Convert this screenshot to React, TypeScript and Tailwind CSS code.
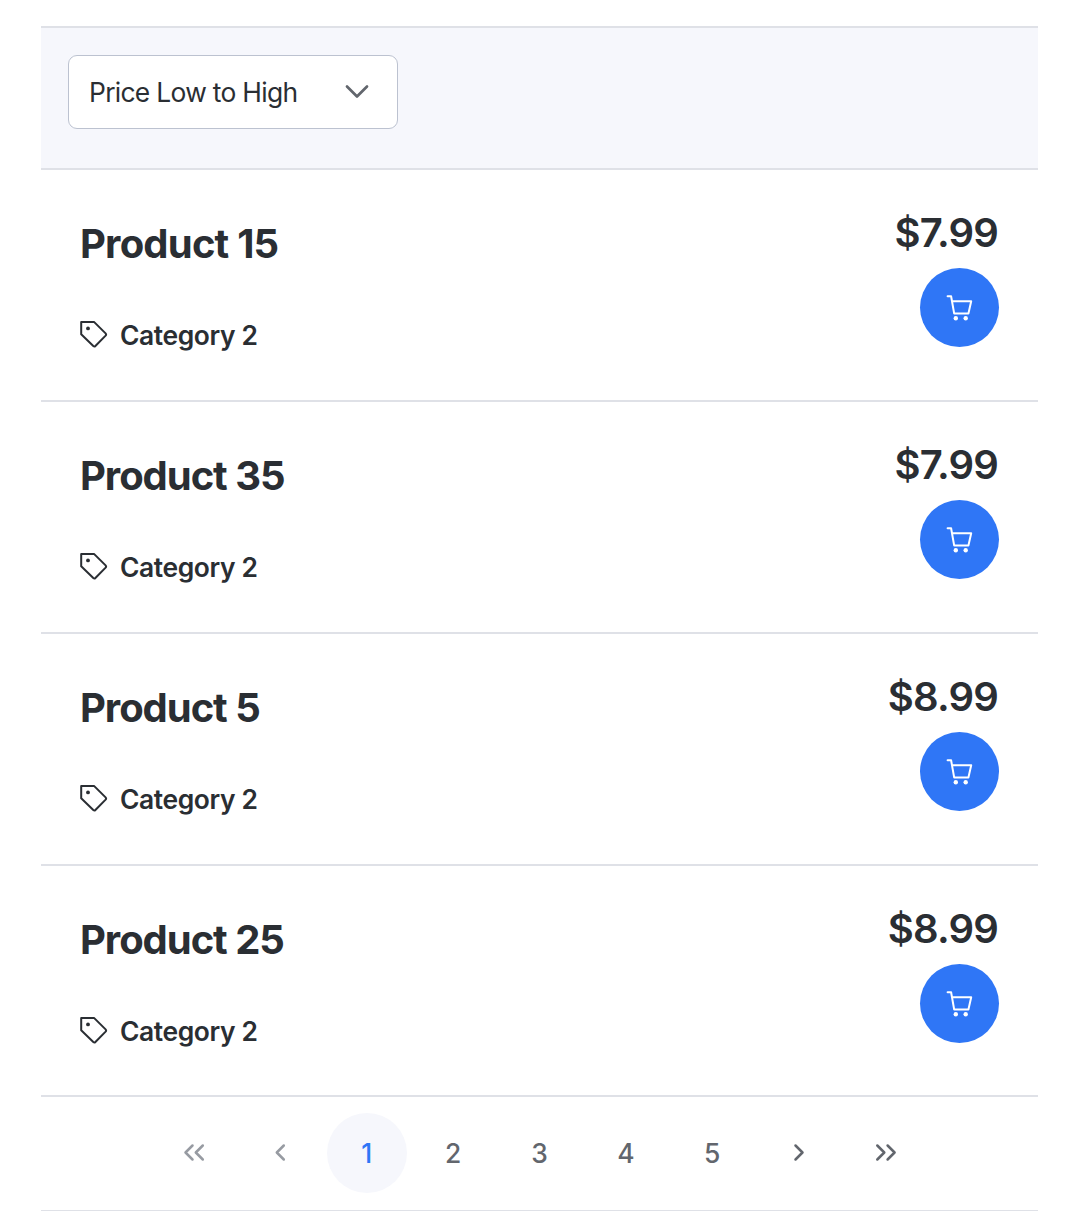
import React from 'react';

const products = [
  { name: 'Product 15', price: '$7.99', tracking: 'tracking-[-0.8px]' },
  { name: 'Product 35', price: '$7.99', tracking: 'tracking-[-1.05px]' },
  { name: 'Product 5', price: '$8.99', tracking: 'tracking-[-1.05px]' },
  { name: 'Product 25', price: '$8.99', tracking: 'tracking-[-1.05px]' },
];

function TagIcon() {
  return (
    <svg width="28" height="28" viewBox="0 0 28 28" fill="none" stroke="#2a2e33" strokeWidth="2" strokeLinejoin="round">
      <path d="M1.2 1.9H14L25.6 13.4Q26.6 14.5 25.6 15.6L15.4 26Q14.4 27 13.3 26L1.2 14.2Z" />
      <circle cx="8" cy="8.4" r="1.9" fill="#2a2e33" stroke="none" />
    </svg>
  );
}

function CartIcon() {
  return (
    <svg width="28" height="28" viewBox="0 0 28 28" fill="none" stroke="#fff" strokeWidth="2" strokeLinecap="round" strokeLinejoin="round">
      <path d="M1.6 2.3H5.1L8.2 19.6H22.4L25.2 7.3H6" />
      <circle cx="9.8" cy="24.2" r="2.2" fill="#fff" stroke="none" />
      <circle cx="19.7" cy="24.2" r="2.2" fill="#fff" stroke="none" />
    </svg>
  );
}

function Chevron({ kind }: { kind: 'first' | 'prev' | 'next' | 'last' }) {
  const paths = {
    first: 'M12.5 6.5L5.5 13.5L12.5 20.5M22.8 6.5L15.8 13.5L22.8 20.5',
    prev: 'M17.8 6.5L10.8 13.5L17.8 20.5',
    next: 'M10.5 6.5L17.5 13.5L10.5 20.5',
    last: 'M6.3 6.5L13.3 13.5L6.3 20.5M16.6 6.5L23.6 13.5L16.6 20.5',
  };
  return (
    <svg width="28" height="28" viewBox="0 0 28 28" fill="none" stroke="currentColor" strokeWidth="2.5" strokeLinecap="round" strokeLinejoin="round">
      <path d={paths[kind]} />
    </svg>
  );
}

const pageButton = 'flex size-20 items-center justify-center rounded-full';

export default function App() {
  return (
    <main className="h-[1214px] bg-white pl-[41px] pr-[47px] pt-[26px] font-['Inter',sans-serif] text-[#2a2e33]">
      <header className="h-36 border-y-2 border-[#dfe1e7] bg-[#f6f7fc] pl-[27px] pt-[27px]">
        <button className="flex h-[74px] w-[330px] items-center justify-between rounded-[9px] border border-[#bcc2d0] bg-white pl-[20px] pr-[26px] text-[26.4px]">
          <span className="pt-px tracking-[-0.7px]">Price Low to High</span>
          <svg width="28" height="28" viewBox="0 0 28 28" fill="none" stroke="#62666d" strokeWidth="2.7" strokeLinecap="round" strokeLinejoin="round">
            <path d="M4 8.5L14 18.5L24 8.5" />
          </svg>
        </button>
      </header>

      <ul>
        {products.map((product) => (
          <li key={product.name} className="flex h-[232px] justify-between border-b-2 border-[#dfe1e7] px-[39px] last:h-[231px]">
            <div className="pt-[50px]">
              <h2 className={`text-[40px] font-bold leading-[48px] ${product.tracking}`}>{product.name}</h2>
              <div className="mt-[50px] flex items-start gap-3 text-[26.4px] font-semibold leading-8">
                <span className="pt-[2px]"><TagIcon /></span>
                <span className="pt-px tracking-[-0.38px]">Category 2</span>
              </div>
            </div>
            <div className="flex flex-col items-end pt-[39px]">
              <span className="pr-px text-[40px] font-semibold leading-[48px] tracking-[-0.8px]">{product.price}</span>
              <button aria-label="Add to cart" className="mt-[11px] flex size-[79px] items-center justify-center rounded-full bg-[#2f76f6]">
                <CartIcon />
              </button>
            </div>
          </li>
        ))}
      </ul>

      <nav className="flex h-[114px] items-center justify-center gap-[6.4px] border-b border-[#dfe1e7] pb-px text-[26.4px] font-medium text-[#62666d]">
        <button aria-label="First page" className={`${pageButton} text-[#979ba2]`}><Chevron kind="first" /></button>
        <button aria-label="Previous page" className={`${pageButton} text-[#979ba2]`}><Chevron kind="prev" /></button>
        <button className={`${pageButton} bg-[#f6f7fc] pt-[2px] text-[#2f76f6]`}>1</button>
        {[2, 3, 4, 5].map((page) => (
          <button key={page} className={`${pageButton} pt-[2px]`}>{page}</button>
        ))}
        <button aria-label="Next page" className={pageButton}><Chevron kind="next" /></button>
        <button aria-label="Last page" className={pageButton}><Chevron kind="last" /></button>
      </nav>
    </main>
  );
}
